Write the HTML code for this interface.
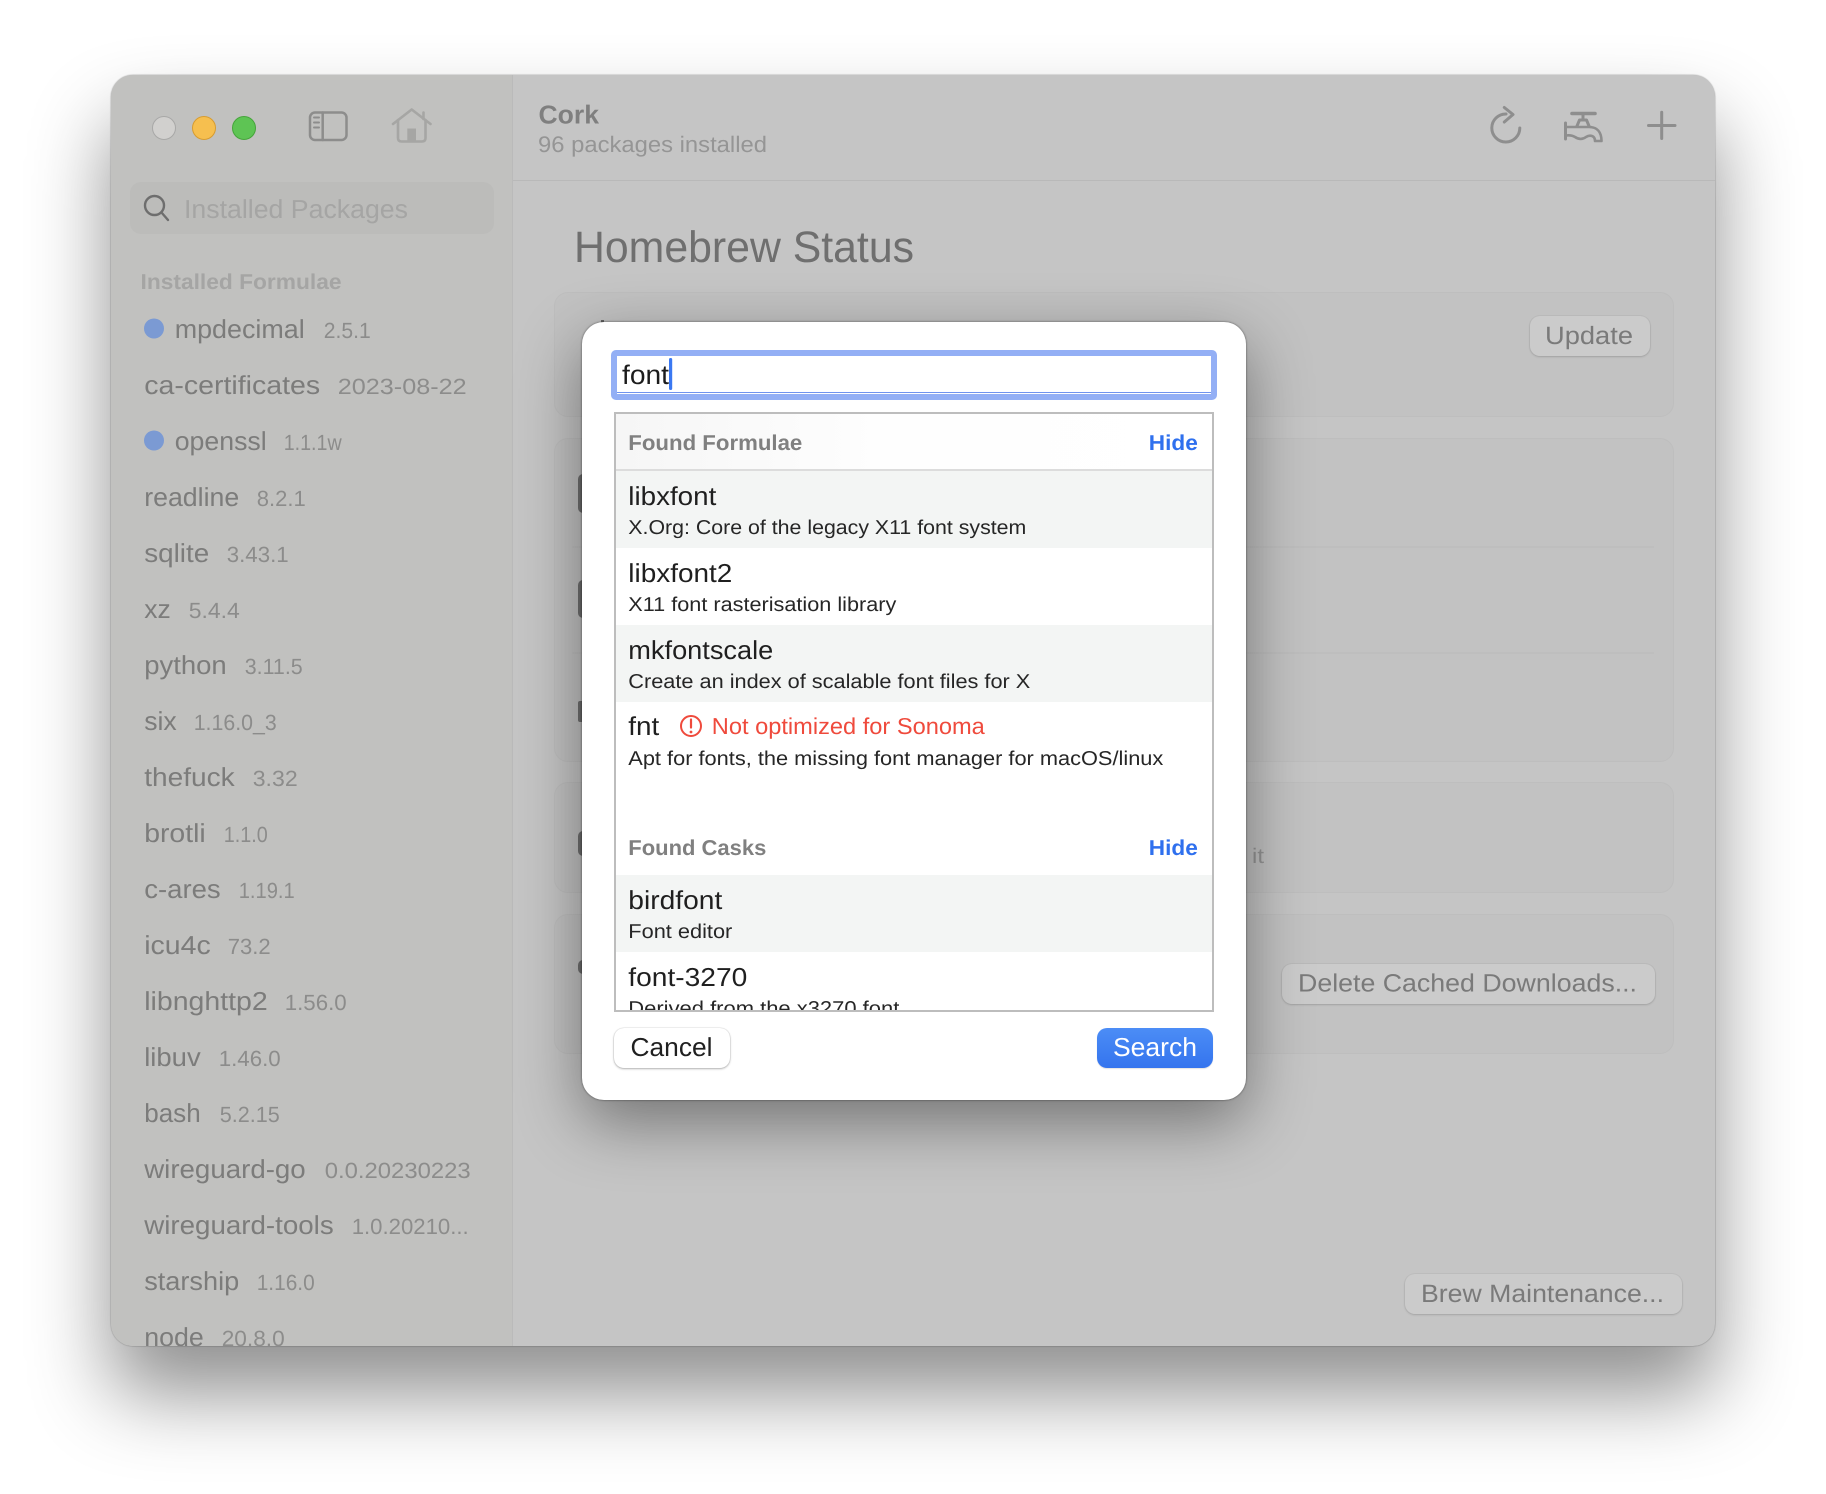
<!DOCTYPE html>
<html lang="en"><head><meta charset="utf-8"><title>Cork</title>
<style>
html,body{margin:0;padding:0;background:#fff;width:1826px;height:1494px;overflow:hidden}
body{position:relative;font-family:"Liberation Sans",sans-serif}
.a{position:absolute;box-sizing:border-box}
svg{position:absolute;left:0;top:0}
text{font-family:"Liberation Sans",sans-serif;text-rendering:geometricPrecision}
.card{background:#c2c2c2;border:1.5px solid #bebebe;border-radius:14px}
.btn{background:#cbcbcb;border-radius:10px;box-shadow:0 1px 2px rgba(0,0,0,.14),0 0 0 1px rgba(0,0,0,.03)}
.n{font-size:26px;fill:#7c7c7b}
.v{font-size:22px;fill:#8c8c8b}
.rn{font-size:26px;fill:#1f1f1f}
.rd{font-size:20px;fill:#262626}
.hd{font-size:21.5px;font-weight:bold;fill:#808080}
.hide{font-size:21.5px;font-weight:bold;fill:#2f70ee}
.bt{font-size:25px;fill:#7a7a7a}
</style></head><body>

<div class="a" style="left:111px;top:75px;width:1604px;height:1271px;border-radius:22px;background:#c5c5c5;box-shadow:0 48px 80px rgba(0,0,0,.44),0 0 1.5px rgba(0,0,0,.45);overflow:hidden">
  <div class="a" style="left:0;top:0;width:402px;height:1271px;background:#c1c1bf;border-right:1.5px solid #bababa"></div>
  <div class="a" style="left:402px;top:105px;width:1202px;height:1px;background:#b9b9b9"></div>
  <div class="a" style="left:19px;top:107px;width:364px;height:52px;border-radius:11px;background:#bcbcba"></div>
</div>

<div class="a card" style="left:554px;top:292px;width:1120px;height:125px"></div>
<div class="a card" style="left:554px;top:438px;width:1120px;height:324px"></div>
<div class="a card" style="left:554px;top:782px;width:1120px;height:111px"></div>
<div class="a card" style="left:554px;top:914px;width:1120px;height:140px"></div>
<div class="a" style="left:572px;top:546px;width:1082px;height:1.5px;background:#bebebe"></div>
<div class="a" style="left:572px;top:652px;width:1082px;height:1.5px;background:#bebebe"></div>
<div class="a btn" style="left:1530px;top:316px;width:120px;height:40px"></div>
<div class="a btn" style="left:1282px;top:964px;width:373px;height:40px"></div>
<div class="a btn" style="left:1405px;top:1274px;width:277px;height:40px"></div>
<div class="a" style="left:578px;top:474px;width:10px;height:39px;background:#707070;border-radius:5px"></div>
<div class="a" style="left:578px;top:580px;width:10px;height:38px;background:#707070;border-radius:5px"></div>
<div class="a" style="left:578px;top:701px;width:10px;height:21px;background:#707070;border-radius:2px"></div>
<div class="a" style="left:578px;top:831px;width:10px;height:25px;background:#707070;border-radius:5px"></div>
<div class="a" style="left:578px;top:960px;width:10px;height:14px;background:#707070;border-radius:7px"></div>
<div class="a" style="left:601px;top:320px;width:3px;height:4px;background:#666"></div>

<svg width="1826" height="1494" viewBox="0 0 1826 1494">
  <defs><clipPath id="w"><rect x="111" y="75" width="1604" height="1271"/></clipPath></defs>
  <circle cx="164" cy="128" r="11.5" fill="#d1d0ce" stroke="#a8a8a7" stroke-width="1"/>
  <circle cx="204" cy="128" r="11.5" fill="#f6bf4f" stroke="#d79c30" stroke-width="1"/>
  <circle cx="244" cy="128" r="11.5" fill="#5ec454" stroke="#46a53b" stroke-width="1"/>

  <g fill="none" stroke="#8d8d8c" stroke-width="2.5" stroke-linecap="round">
    <rect x="310" y="112.5" width="36.5" height="27.5" rx="5"/>
    <path d="M322.7 112.5V140"/>
    <path d="M314 117.5H319M314 122.5H319M314 127.5H319" stroke-width="2"/>
  </g>
  <g fill="none" stroke="#a6a6a4" stroke-width="2.6" stroke-linecap="round" stroke-linejoin="round">
    <path d="M393 124L411.7 109.5L430.5 124"/>
    <path d="M398 120V138Q398 141.5 401.5 141.5H422Q425.5 141.5 425.5 138V120"/>
    <path d="M423.5 112.5V119"/>
  </g>
  <rect x="407.3" y="128.5" width="8.7" height="13" fill="#a6a6a4"/>

  <g fill="none" stroke="#6e6e6e" stroke-width="2.4" stroke-linecap="round">
    <circle cx="154.5" cy="205.5" r="9.5"/>
    <path d="M161.5 212.5L168 220"/>
  </g>

  <text x="184" y="218" font-size="26" fill="#a5a5a4" textLength="224" lengthAdjust="spacingAndGlyphs">Installed Packages</text>
  <text x="140.5" y="289" font-size="21.5" font-weight="bold" fill="#a5a5a4" textLength="201" lengthAdjust="spacingAndGlyphs">Installed Formulae</text>

  <circle cx="154" cy="328.5" r="10" fill="#7b9ad3"/>
  <circle cx="154" cy="440.5" r="10" fill="#7b9ad3"/>

  <g clip-path="url(#w)"><g transform="translate(-0.3,1)">
    <text class="n" x="175" y="337" textLength="130" lengthAdjust="spacingAndGlyphs">mpdecimal</text><text class="v" x="324" y="337" textLength="47" lengthAdjust="spacingAndGlyphs">2.5.1</text>
    <text class="n" x="144.5" y="393" textLength="176" lengthAdjust="spacingAndGlyphs">ca-certificates</text><text class="v" x="338" y="393" textLength="129" lengthAdjust="spacingAndGlyphs">2023-08-22</text>
    <text class="n" x="175" y="449" textLength="92" lengthAdjust="spacingAndGlyphs">openssl</text><text class="v" x="284" y="449" textLength="58" lengthAdjust="spacingAndGlyphs">1.1.1w</text>
    <text class="n" x="144.5" y="505" textLength="95" lengthAdjust="spacingAndGlyphs">readline</text><text class="v" x="257" y="505" textLength="49" lengthAdjust="spacingAndGlyphs">8.2.1</text>
    <text class="n" x="144.5" y="561" textLength="65" lengthAdjust="spacingAndGlyphs">sqlite</text><text class="v" x="227" y="561" textLength="62" lengthAdjust="spacingAndGlyphs">3.43.1</text>
    <text class="n" x="144.5" y="617" textLength="26.5" lengthAdjust="spacingAndGlyphs">xz</text><text class="v" x="189" y="617" textLength="51" lengthAdjust="spacingAndGlyphs">5.4.4</text>
    <text class="n" x="144.5" y="673" textLength="82.5" lengthAdjust="spacingAndGlyphs">python</text><text class="v" x="245" y="673" textLength="58" lengthAdjust="spacingAndGlyphs">3.11.5</text>
    <text class="n" x="144.5" y="729" textLength="32.5" lengthAdjust="spacingAndGlyphs">six</text><text class="v" x="194" y="729" textLength="83" lengthAdjust="spacingAndGlyphs">1.16.0_3</text>
    <text class="n" x="144.5" y="785" textLength="90.5" lengthAdjust="spacingAndGlyphs">thefuck</text><text class="v" x="253" y="785" textLength="45" lengthAdjust="spacingAndGlyphs">3.32</text>
    <text class="n" x="144.5" y="841" textLength="61.5" lengthAdjust="spacingAndGlyphs">brotli</text><text class="v" x="224" y="841" textLength="44" lengthAdjust="spacingAndGlyphs">1.1.0</text>
    <text class="n" x="144.5" y="897" textLength="76.5" lengthAdjust="spacingAndGlyphs">c-ares</text><text class="v" x="239" y="897" textLength="56" lengthAdjust="spacingAndGlyphs">1.19.1</text>
    <text class="n" x="144.5" y="953" textLength="66.5" lengthAdjust="spacingAndGlyphs">icu4c</text><text class="v" x="228" y="953" textLength="43" lengthAdjust="spacingAndGlyphs">73.2</text>
    <text class="n" x="144.5" y="1009" textLength="123.5" lengthAdjust="spacingAndGlyphs">libnghttp2</text><text class="v" x="285" y="1009" textLength="62" lengthAdjust="spacingAndGlyphs">1.56.0</text>
    <text class="n" x="144.5" y="1065" textLength="56.5" lengthAdjust="spacingAndGlyphs">libuv</text><text class="v" x="219" y="1065" textLength="62" lengthAdjust="spacingAndGlyphs">1.46.0</text>
    <text class="n" x="144.5" y="1121" textLength="56.5" lengthAdjust="spacingAndGlyphs">bash</text><text class="v" x="220" y="1121" textLength="60" lengthAdjust="spacingAndGlyphs">5.2.15</text>
    <text class="n" x="144.5" y="1177" textLength="161.5" lengthAdjust="spacingAndGlyphs">wireguard-go</text><text class="v" x="325" y="1177" textLength="146" lengthAdjust="spacingAndGlyphs">0.0.20230223</text>
    <text class="n" x="144.5" y="1233" textLength="189.5" lengthAdjust="spacingAndGlyphs">wireguard-tools</text><text class="v" x="352" y="1233" textLength="117" lengthAdjust="spacingAndGlyphs">1.0.20210...</text>
    <text class="n" x="144.5" y="1289" textLength="95" lengthAdjust="spacingAndGlyphs">starship</text><text class="v" x="257" y="1289" textLength="58" lengthAdjust="spacingAndGlyphs">1.16.0</text>
    <text class="n" x="144.5" y="1345" textLength="59.5" lengthAdjust="spacingAndGlyphs">node</text><text class="v" x="222" y="1345" textLength="63" lengthAdjust="spacingAndGlyphs">20.8.0</text>
  </g></g>

  <text x="538.5" y="123.5" font-size="26" font-weight="bold" fill="#7f7f7f" textLength="60.5" lengthAdjust="spacingAndGlyphs">Cork</text>
  <text x="538" y="152" font-size="22.5" fill="#959595" textLength="229" lengthAdjust="spacingAndGlyphs">96 packages installed</text>
  <text x="574" y="262" font-size="44" fill="#6f6f6f" textLength="340" lengthAdjust="spacingAndGlyphs">Homebrew Status</text>

  <g fill="none" stroke="#8e8e8e" stroke-width="3" stroke-linecap="round" stroke-linejoin="round">
    <path d="M1506 114A14 14 0 1 0 1519.8 128"/>
    <path d="M1504.3 107.5L1513 114.5L1504.3 122"/>
    <path d="M1572 113.5H1595" stroke-width="3.6"/>
    <path d="M1583 113.5V120"/>
    <path d="M1577 126L1579.5 120H1586.5L1589 126"/>
    <path d="M1565.5 127H1589C1597 127 1601.5 132 1601.5 141H1595C1595 135.5 1590 134.5 1586 137C1582 140 1578 139 1575 137C1572 135 1569 135 1565.5 135.5" stroke-width="2.6"/>
    <path d="M1565.5 123V139"/>
    <path d="M1648.5 125.5H1675M1661.7 112.3V138.5"/>
  </g>

  <text class="bt" x="1545" y="344" textLength="88" lengthAdjust="spacingAndGlyphs">Update</text>
  <text class="bt" x="1298" y="991.5" textLength="339" lengthAdjust="spacingAndGlyphs">Delete Cached Downloads...</text>
  <text class="bt" x="1421" y="1302" textLength="243" lengthAdjust="spacingAndGlyphs">Brew Maintenance...</text>
  <text x="1252" y="863" font-size="21" fill="#959595" textLength="12" lengthAdjust="spacingAndGlyphs">it</text>
</svg>

<!-- sheet -->
<div class="a" style="left:582px;top:322px;width:664px;height:778px;border-radius:22px;background:#fff;box-shadow:0 0 2px rgba(0,0,0,.55),0 22px 64px rgba(0,0,0,.42)"></div>
<div class="a" style="left:611px;top:350px;width:606px;height:50px;border-radius:5px;background:#fff;border:6.5px solid #93aff5"></div>
<div class="a" style="left:617px;top:391.5px;width:594px;height:1.5px;background:#6f93ee"></div>
<div class="a" style="left:614px;top:412px;width:600px;height:600px;background:#fff;border:2px solid #bdbdbd;overflow:hidden">
  <div class="a" style="left:0;top:0;width:596px;height:55px;background:linear-gradient(90deg,#f6f6f6,#fefefe 45%,#fff)"></div>
  <div class="a" style="left:0;top:55px;width:596px;height:1.5px;background:#dcdcdc"></div>
  <div class="a" style="left:0;top:56.5px;width:596px;height:77.5px;background:#f3f5f4"></div>
  <div class="a" style="left:0;top:211px;width:596px;height:77px;background:#f3f5f4"></div>
  <div class="a" style="left:0;top:461px;width:596px;height:77px;background:#f3f5f4"></div>
</div>
<div class="a" style="left:614px;top:1028px;width:116px;height:40px;border-radius:10px;background:#fff;box-shadow:0 1px 2px rgba(0,0,0,.28),0 0 1px rgba(0,0,0,.3)"></div>
<div class="a" style="left:1097px;top:1028px;width:116px;height:40px;border-radius:10px;background:linear-gradient(#4c8df6,#3474ee);box-shadow:0 1px 1px rgba(0,0,0,.12)"></div>

<svg width="1826" height="1494" viewBox="0 0 1826 1494">
  <defs><clipPath id="l"><rect x="616" y="414" width="596" height="596"/></clipPath></defs>
  <text x="622" y="384" font-size="27" fill="#1c1c1c" textLength="47" lengthAdjust="spacingAndGlyphs">font</text>
  <rect x="669" y="358" width="3.2" height="32" rx="1.5" fill="#3a78f2"/>
  <g clip-path="url(#l)"><g transform="translate(-0.7,0)">
    <text class="hd" x="629" y="450" textLength="174" lengthAdjust="spacingAndGlyphs">Found Formulae</text>
    <text class="hide" x="1149.5" y="450" textLength="49" lengthAdjust="spacingAndGlyphs">Hide</text>

    <text class="rn" x="629" y="505" textLength="88" lengthAdjust="spacingAndGlyphs">libxfont</text>
    <text class="rd" x="629" y="534" textLength="398" lengthAdjust="spacingAndGlyphs">X.Org: Core of the legacy X11 font system</text>
    <text class="rn" x="629" y="582" textLength="104" lengthAdjust="spacingAndGlyphs">libxfont2</text>
    <text class="rd" x="629" y="611" textLength="268" lengthAdjust="spacingAndGlyphs">X11 font rasterisation library</text>
    <text class="rn" x="629" y="659" textLength="145" lengthAdjust="spacingAndGlyphs">mkfontscale</text>
    <text class="rd" x="629" y="688" textLength="402" lengthAdjust="spacingAndGlyphs">Create an index of scalable font files for X</text>
    <text class="rn" x="629" y="735" textLength="31" lengthAdjust="spacingAndGlyphs">fnt</text>
    <circle cx="691.7" cy="726" r="10" fill="none" stroke="#ef4a3c" stroke-width="2"/>
    <path d="M691.7 719.5V727.5" stroke="#ef4a3c" stroke-width="2.2" stroke-linecap="round"/>
    <circle cx="691.7" cy="732" r="1.4" fill="#ef4a3c"/>
    <text x="712.5" y="734" font-size="23" fill="#ef4a3c" textLength="273" lengthAdjust="spacingAndGlyphs">Not optimized for Sonoma</text>
    <text class="rd" x="629" y="765" textLength="535" lengthAdjust="spacingAndGlyphs">Apt for fonts, the missing font manager for macOS/linux</text>

    <text class="hd" x="629" y="855" textLength="138" lengthAdjust="spacingAndGlyphs">Found Casks</text>
    <text class="hide" x="1149.5" y="855" textLength="49" lengthAdjust="spacingAndGlyphs">Hide</text>

    <text class="rn" x="629" y="909" textLength="94" lengthAdjust="spacingAndGlyphs">birdfont</text>
    <text class="rd" x="629" y="938" textLength="104" lengthAdjust="spacingAndGlyphs">Font editor</text>
    <text class="rn" x="629" y="986" textLength="119" lengthAdjust="spacingAndGlyphs">font-3270</text>
    <text class="rd" x="629" y="1015" textLength="271" lengthAdjust="spacingAndGlyphs">Derived from the x3270 font</text>
  </g></g>
  <text x="630.5" y="1056" font-size="26" fill="#202020" textLength="82" lengthAdjust="spacingAndGlyphs">Cancel</text>
  <text x="1113" y="1056" font-size="26" fill="#fff" textLength="84" lengthAdjust="spacingAndGlyphs">Search</text>
</svg>
</body></html>
